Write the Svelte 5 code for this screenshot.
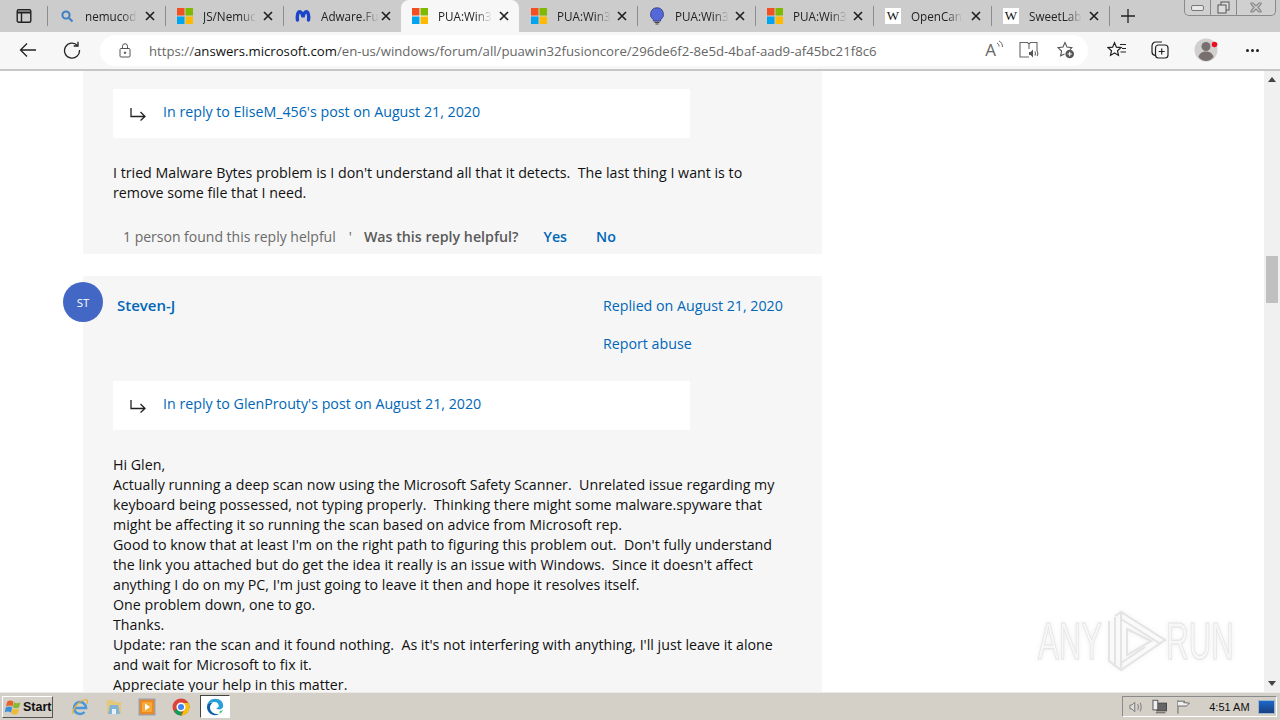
<script>
  const tabs = [
    { icon: 'search', label: 'nemucod' },
    { icon: 'ms', label: 'JS/Nemuc' },
    { icon: 'mb', label: 'Adware.Fu' },
    { icon: 'ms', label: 'PUA:Win3', active: true },
    { icon: 'ms', label: 'PUA:Win3' },
    { icon: 'bulb', label: 'PUA:Win3' },
    { icon: 'ms', label: 'PUA:Win3' },
    { icon: 'w', label: 'OpenCan' },
    { icon: 'w', label: 'SweetLab' }
  ];
</script>

<div class="screen">
  <header class="tabstrip">
    <div class="tabaction">
      <svg width="16" height="16" viewBox="0 0 16 16" fill="none" stroke="#222" stroke-width="1.4"><rect x="1.2" y="1.7" width="13.6" height="12.6" rx="1.5"/><path d="M1.2 4.5h13.6" stroke-width="2"/><path d="M5.5 4.5v9.8"/></svg>
    </div>
    {#each tabs as tab}
      <div class="tab" class:active={tab.active}>
        <span class="favicon">
          {#if tab.icon === 'ms'}
            <svg width="16" height="16" viewBox="0 0 16 16"><rect width="7.5" height="7.5" fill="#f25022"/><rect x="8.5" width="7.5" height="7.5" fill="#7fba00"/><rect y="8.5" width="7.5" height="7.5" fill="#00a4ef"/><rect x="8.5" y="8.5" width="7.5" height="7.5" fill="#ffb900"/></svg>
          {:else if tab.icon === 'search'}
            <svg width="16" height="16" viewBox="0 0 16 16" fill="none" stroke="#3b7fc4" stroke-width="2"><circle cx="7" cy="7" r="3.6"/><path d="M10 10l3.5 3.5"/></svg>
          {:else if tab.icon === 'mb'}
            <svg width="16" height="16" viewBox="0 0 16 16" fill="none" stroke="#1b45c8" stroke-width="3.4" stroke-linecap="round"><path d="M2.500 12C1.800 7 3 3.800 4.800 3.800 6.300 3.800 7.400 6.500 8 9c.6-2.500 1.700-5.200 3.200-5.200 1.800 0 3 3.200 2.300 8.200"/></svg>
          {:else if tab.icon === 'bulb'}
            <svg width="16" height="18" viewBox="0 0 16 18"><path d="M8 .8a6.500 6.500 0 0 0-3.600 11.900V14h7.200v-1.300A6.500 6.500 0 0 0 8 .8z" fill="#5568d8" stroke="#2f3a7c" stroke-width=".8"/><path d="M5.500 15.400h5M6.500 17h3" stroke="#444" stroke-width="1.200"/></svg>
          {:else}
            <span class="wiki">W</span>
          {/if}
        </span>
        <span class="tablabel">{tab.label}</span>
        <svg class="close" width="10" height="10" viewBox="0 0 10 10" stroke="#222" stroke-width="1.700"><path d="M1 1l8 8M9 1l-8 8"/></svg>
      </div>
    {/each}
    <span class="lastsep"></span>
    <svg class="newtab" width="16" height="16" viewBox="0 0 16 16" stroke="#222" stroke-width="1.300"><path d="M8 1v14M1 8h14"/></svg>
    <div class="winctl">
      <span class="wbtn wmin"><i></i></span>
      <span class="wbtn wmax"><svg width="13" height="13" viewBox="0 0 13 13" fill="#ddd" stroke="#555"><rect x="4" y="1" width="8" height="8"/><rect x="1" y="4" width="8" height="8"/></svg></span>
      <span class="wbtn wclose"><svg width="14" height="11" viewBox="0 0 14 11" fill="none" stroke="#888" stroke-width="1.200"><path d="M2 1h2l3 3 3-3h2v1L9 5.500 12 9v1h-2L7 7l-3 3H2V9l3-3.500L2 2z"/></svg></span>
    </div>
  </header>

  <nav class="toolbar">
    <svg class="tool back" width="18" height="16" viewBox="0 0 18 16" fill="none" stroke="#222" stroke-width="1.300"><path d="M17 8H1.500M8 1.500L1.500 8 8 14.500"/></svg>
    <svg class="tool reload" width="18" height="18" viewBox="0 0 18 18" fill="none" stroke="#222" stroke-width="1.300"><path d="M14.500 4.500A7.500 7.500 0 1 0 16.500 9"/><path d="M15 .8v4.200h-4.300"/></svg>
    <div class="address">
      <svg class="lock" width="12" height="15" viewBox="0 0 12 15" fill="none" stroke="#555"><rect x="1" y="5.500" width="10" height="8.500" rx="1"/><path d="M3.500 5.500V3.200a2.500 2.500 0 0 1 5 0v2.300"/><circle cx="6" cy="9.800" r=".8" fill="#555"/></svg>
      <span class="url"><span class="dim">https://</span>answers.microsoft.com<span class="dim">/en-us/windows/forum/all/puawin32fusioncore/296de6f2-8e5d-4baf-aad9-af45bc21f8c6</span></span>
      <span class="addr-icons">
        <span class="readaloud">A<svg width="8" height="11" viewBox="0 0 8 11" fill="none" stroke="#666"><path d="M1 3c1.500.6 2 2 2 3.500M3 1c2.500 1 3.500 3.500 3.500 6"/></svg></span>
        <svg class="reader" width="20" height="18" viewBox="0 0 20 18" fill="none" stroke="#666" stroke-width="1.100"><path d="M10 16H1V1.500h7.500L10 3l1.500-1.500H18V10M10 3v5"/><path d="M10 11h1.500L14 8.500v8L11.500 14H10z" fill="#555" stroke="none"/><path d="M15.800 10.500c.7 1 .7 3 0 4M18 10c1 1.500 1 3.500 0 5"/></svg>
        <svg width="18" height="18" viewBox="0 0 18 18" fill="none" stroke="#555" stroke-width="1.100"><path d="M13 8.500l1.800-1.900-4.800-.6L8 1.500 6 6l-5 .6 3.600 3.400-1 4.800L7.500 13"/><circle cx="12.700" cy="13" r="4.300" fill="#555" stroke="none"/><path d="M12.700 10.800v4.400M10.500 13h4.400" stroke="#fff"/></svg>
      </span>
    </div>
    <svg class="tool fav" width="20" height="18" viewBox="0 0 20 18" fill="none" stroke="#222" stroke-width="1.200"><path d="M7.500 1.800l1.900 4.400 4.600.4-3.500 3.100 1 4.700-4-2.400-4 2.400 1-4.700L1 6.600l4.600-.4zM13 3.500h6M15 7.500h4M13.500 11h5.500"/></svg>
    <svg class="tool coll" width="18" height="18" viewBox="0 0 18 18" fill="none" stroke="#222" stroke-width="1.200"><path d="M4 14.500c-2-.5-3-2-3-3.500V5c0-2 1.500-4 4-4h6"/><rect x="4.500" y="4" width="12.500" height="13" rx="3"/><path d="M10.700 7.500v6M7.700 10.500h6"/></svg>
    <span class="tool profile">
      <svg width="26" height="26" viewBox="0 0 26 26"><circle cx="12" cy="13" r="11.500" fill="#d2d0cf"/><circle cx="12" cy="9.500" r="4.500" fill="#77706f"/><path d="M4.500 20c1-4 4-5.500 7.500-5.500s6.500 1.500 7.500 5.500c-2 2.500-5 4-7.500 4s-5.500-1.500-7.500-4z" fill="#77706f"/><circle cx="20.500" cy="7.500" r="2.800" fill="#e81123"/></svg>
    </span>
    <span class="tool dots"><i></i><i></i><i></i></span>
  </nav>

  <div class="viewport">
    <main class="page">
      <article class="card first">
        <a class="replybox">
          <svg class="replyarrow" width="16" height="13" viewBox="0 0 16 13" fill="none" stroke="#222" stroke-width="1.300"><path d="M1 0v8.500h14M10.500 4l4.500 4.500-4.500 4"/></svg>
          In reply to EliseM_456's post on August 21, 2020
        </a>
        <p class="body">I tried Malware Bytes problem is I don't understand all that it detects.&nbsp; The last thing I want is to<br />remove some file that I need.</p>
        <div class="helpful">
          <span class="count">1 person found this reply helpful</span>
          <span class="dot">'</span>
          <strong class="ask">Was this reply helpful?</strong>
          <a class="vote yes">Yes</a>
          <a class="vote">No</a>
        </div>
      </article>

      <article class="card second">
        <div class="avatar">ST</div>
        <div class="head">
          <a class="author">Steven-J</a>
          <div class="meta">
            <a class="replied">Replied on August 21, 2020</a>
            <a>Report abuse</a>
          </div>
        </div>
        <a class="replybox">
          <svg class="replyarrow" width="16" height="13" viewBox="0 0 16 13" fill="none" stroke="#222" stroke-width="1.300"><path d="M1 0v8.500h14M10.500 4l4.500 4.500-4.500 4"/></svg>
          In reply to GlenProuty's post on August 21, 2020
        </a>
        <p class="body long">Hi Glen,<br />
Actually running a deep scan now using the Microsoft Safety Scanner.&nbsp; Unrelated issue regarding my<br />
keyboard being possessed, not typing properly.&nbsp; Thinking there might some malware.spyware that<br />
might be affecting it so running the scan based on advice from Microsoft rep.<br />
Good to know that at least I'm on the right path to figuring this problem out.&nbsp; Don't fully understand<br />
the link you attached but do get the idea it really is an issue with Windows.&nbsp; Since it doesn't affect<br />
anything I do on my PC, I'm just going to leave it then and hope it resolves itself.<br />
One problem down, one to go.<br />
Thanks.<br />
Update: ran the scan and it found nothing.&nbsp; As it's not interfering with anything, I'll just leave it alone<br />
and wait for Microsoft to fix it.<br />
Appreciate your help in this matter.</p>
      </article>
    </main>

    <aside class="scrollbar">
      <span class="arrow up"></span>
      <span class="thumb"></span>
      <span class="arrow down"></span>
    </aside>

    <div class="watermark">
      <span>ANY</span>
      <svg width="60" height="64" viewBox="0 0 60 64" fill="none" stroke="#e4e4e4" stroke-width="2"><path d="M2 12v40l12 9 44-30L14 3 8 7"/><path d="M8 8v50M14 3v56"/><path d="M20 20l24 12-24 14z"/><path d="M14 10l38 24M14 54l24-16"/></svg>
      <span class="run">RUN</span>
    </div>
  </div>

  <footer class="taskbar">
    <div class="start">
      <svg width="17" height="16" viewBox="0 0 16 15"><path d="M2 2.500c2-1.500 4-1.500 6 0L7 7C5 5.700 3 5.700 1 7z" fill="#e8622c"/><path d="M8.500 3c2 1.300 4 1.300 6 0l-1.200 4.800c-2 1.300-4 1.300-6 0z" fill="#8ab82e"/><path d="M.8 8c2-1.300 4-1.300 6 0l-1.200 4.800c-2-1.300-4-1.300-6 0z" fill="#3b8fd8"/><path d="M7.200 8.800c2 1.300 4 1.300 6 0L12 13.500c-2 1.300-4 1.300-6 0z" fill="#f2b92c"/></svg>
      <b>Start</b>
    </div>
    <div class="apps">
      <svg width="18" height="18" viewBox="0 0 18 18" fill="none"><path d="M3.500 10h11.500a6 6 0 1 0-1.500 4" stroke="#4a98d8" stroke-width="2.600"/><path d="M2 16C1 11 8 2.500 14.500 1.500c2.500 0 2.500 2 1.500 4.500" stroke="#e8b030" stroke-width="1.200"/></svg>
      <svg width="18" height="17" viewBox="0 0 18 17"><path d="M2 2h6l1.500 2H16v12H2z" fill="#e8c878"/><path d="M5 7h8l2 9H3z" fill="#7fb4d8"/><rect x="7" y="11" width="4" height="5" fill="#e8f0f8"/></svg>
      <svg width="18" height="18" viewBox="0 0 18 18"><rect x="1" y="1" width="16" height="16" fill="#e88a28" stroke="#8aa4c8"/><rect x="4" y="4" width="10" height="10" rx="1" fill="#f8a838"/><path d="M7 5.500l5 3.500-5 3.500z" fill="#fff"/></svg>
      <svg width="18" height="18" viewBox="0 0 18 18"><circle cx="9" cy="9" r="8.500" fill="#db4437"/><path d="M9 9L2 13a8.500 8.500 0 0 0 7.500 4.500z" fill="#0f9d58"/><path d="M9 5h7.500a8.500 8.500 0 0 1-7 12.500L13 10z" fill="#f4c20d"/><circle cx="9" cy="9" r="3.800" fill="#4285f4" stroke="#fff" stroke-width="1.500"/></svg>
      <span class="activeapp">
        <svg width="18" height="18" viewBox="0 0 18 18"><path d="M1 9C1 4 4.500.8 9.500.8c4.500 0 7.700 3.200 7.700 7 0 2.500-2 3.700-4 3.700-1.500 0-2.500-.5-3-1.200 2-.3 2.500-1.500 2.500-2.500C12.700 5.500 11 4 8.500 4 4.500 4 1 6 1 9z" fill="#2a9fd8"/><path d="M1 9c0-3.500 3.500-4.500 6-4.500-2 1-3 3-3 5 0 4 4 7.500 9.500 6.300-1.300.9-2.800 1.400-4.500 1.400C4.500 17.200 1 13.500 1 9z" fill="#0a5fa8"/><path d="M13.500 15.800c1.500-.7 3-2 3.700-4-1 1-2.500 1-3.500 1.200z" fill="#3cc884"/></svg>
      </span>
    </div>
    <div class="tray">
      <svg width="16" height="14" viewBox="0 0 16 14" fill="none" stroke="#777"><path d="M1 5h2l3-3v10L3 9H1z" fill="#ddd"/><path d="M9 4c1 2 1 4 0 6M11.500 2.500c1.500 3 1.500 6 0 9"/></svg>
      <svg width="16" height="16" viewBox="0 0 16 16"><rect x="5" y="4" width="10" height="8" fill="#666" stroke="#444"/><rect x="1" y="1" width="5" height="10" fill="#eee" stroke="#555"/><path d="M4 14h10" stroke="#555"/></svg>
      <svg width="16" height="16" viewBox="0 0 16 16" fill="none" stroke="#666"><path d="M2 1v14"/><path d="M2 2h7l-1 1.500 6 .5-3 3H2" fill="#eee"/></svg>
      <span class="clock">4:51 AM</span>
      <span class="showdesk"></span>
    </div>
  </footer>
</div>

<style>
  :global(body) {
    margin: 0;
    overflow: hidden;
  }
  .screen {
    width: 1280px;
    height: 720px;
    display: flex;
    flex-direction: column;
    overflow: hidden;
    font-family: "Open Sans", "Liberation Sans", sans-serif;
    color: #111;
  }
  .tabstrip {
    height: 32px;
    flex: none;
    display: flex;
    align-items: stretch;
    background: #cccccc;
    position: relative;
  }
  .tabaction {
    width: 47px;
    display: flex;
    align-items: center;
    justify-content: center;
  }
  .tab {
    width: 118px;
    box-sizing: border-box;
    display: flex;
    align-items: center;
    position: relative;
    padding-left: 12px;
  }
  .tab::before,
  .lastsep {
    content: "";
    width: 1px;
    background: #8c8c8c;
  }
  .tab::before {
    position: absolute;
    left: 0;
    top: 6px;
    bottom: 6px;
  }
  .tab.active::before,
  .tab.active + .tab::before {
    display: none;
  }
  .tab.active {
    background: #f7f7f7;
    border-radius: 8px 8px 0 0;
    padding-left: 11px;
  }
  .lastsep {
    margin: 6px 0;
  }
  .favicon {
    width: 16px;
    height: 16px;
    flex: none;
    display: flex;
    align-items: center;
    justify-content: center;
  }
  .wiki {
    width: 16px;
    height: 16px;
    background: #fff;
    font: 13px/16px "Liberation Serif", serif;
    text-align: center;
    color: #111;
  }
  .tablabel {
    margin-left: 10px;
    font-size: 11.700px;
    white-space: nowrap;
    color: #222;
    -webkit-mask-image: linear-gradient(90deg, #000 70%, transparent);
    mask-image: linear-gradient(90deg, #000 70%, transparent);
  }
  .close {
    position: absolute;
    left: 98px;
    top: 11px;
  }
  .newtab {
    margin: 8px 0 0 10px;
  }
  .winctl {
    position: absolute;
    left: 1184px;
    top: 0;
    width: 92px;
    height: 16px;
    box-sizing: border-box;
    display: flex;
    border: 1px solid #8a8a8a;
    border-top: 0;
    border-radius: 0 0 5px 5px;
    background: #d0d0d0;
  }
  .wbtn {
    display: flex;
    align-items: center;
    justify-content: center;
    border-right: 1px solid #8a8a8a;
  }
  .wmin { width: 25px; }
  .wmin i {
    width: 11px;
    height: 4px;
    border: 1px solid #777;
    border-radius: 2px;
    background: #e8e8e8;
  }
  .wmax { width: 25px; }
  .wclose { flex: 1; border-right: 0; }

  .toolbar {
    height: 39px;
    flex: none;
    box-sizing: border-box;
    background: #f7f7f7;
    border-bottom: 2px solid #c6c6c6;
    display: flex;
    align-items: center;
    position: relative;
    padding-bottom: 1px;
  }
  .back { margin-left: 19px; }
  .reload { margin-left: 26px; }
  .address {
    margin-left: 19px;
    width: 988px;
    height: 31px;
    box-sizing: border-box;
    background: #fff;
    border-radius: 16px;
    display: flex;
    align-items: center;
    padding-left: 19px;
  }
  .url {
    margin: 1px 0 0 18px;
    font-size: 13.200px;
    white-space: nowrap;
    color: #111;
  }
  .dim { color: #666; }
  .addr-icons {
    margin-left: auto;
    display: flex;
    align-items: center;
    gap: 17px;
    padding-right: 13px;
  }
  .readaloud {
    font-size: 17px;
    color: #666;
    display: flex;
    align-items: flex-start;
    line-height: 20px;
    margin-right: -2px;
  }
  .reader { margin-right: 1px; }
  .fav { margin-left: 19px; }
  .coll { margin-left: 24px; }
  .profile { margin-left: 25px; display: flex; }
  .dots {
    margin-left: 26px;
    display: flex;
    gap: 2px;
  }
  .dots i {
    width: 3px;
    height: 3px;
    border-radius: 50%;
    background: #222;
  }

  .viewport {
    flex: 1;
    min-height: 0;
    display: flex;
    position: relative;
    background: #fff;
    overflow: hidden;
  }
  .page {
    flex: 1;
    padding-left: 83px;
    overflow: hidden;
  }
  .card {
    width: 739px;
    box-sizing: border-box;
    background: #f6f6f6;
    padding: 0 30px;
    position: relative;
  }
  .card.first {
    height: 183px;
    padding-top: 18px;
  }
  .card.second {
    margin-top: 22px;
    height: 430px;
    padding-top: 19px;
  }
  a {
    color: #0067b8;
  }
  .replybox {
    width: 577px;
    height: 49px;
    box-sizing: border-box;
    background: #fff;
    display: flex;
    align-items: center;
    padding: 0 0 4px 17px;
    font-size: 14.230px;
    white-space: nowrap;
  }
  .replyarrow {
    margin: 5px 17px 0 0;
    flex: none;
  }
  .body {
    margin: 25px 0 0;
    font-size: 14.230px;
    line-height: 20px;
    color: #111;
    white-space: nowrap;
  }
  .helpful {
    display: flex;
    align-items: center;
    margin-top: 21px;
    padding-left: 10px;
    height: 24px;
    font-size: 14.230px;
    color: #6a6a6a;
    white-space: nowrap;
  }
  .count { font-size: 14px; }
  .dot {
    margin: 0 12px 0 13px;
  }
  .ask {
    color: #5a5a5a;
    font-weight: 600;
  }
  .vote {
    margin-left: 29px;
    font-weight: 600;
  }
  .vote.yes { margin-left: 25px; }
  .avatar {
    position: absolute;
    left: -20px;
    top: 6px;
    width: 40px;
    height: 40px;
    border-radius: 50%;
    background: #4267c4;
    color: #fff;
    font-size: 11.500px;
    display: flex;
    align-items: center;
    justify-content: center;
  }
  .head {
    display: flex;
    justify-content: space-between;
    height: 85px;
    margin-top: 1px;
    font-size: 14.230px;
    padding-right: 6px;
  }
  .author {
    font-size: 15px;
    font-weight: 600;
    margin: -1px 0 0 4px;
    line-height: 20px;
  }
  .meta {
    display: flex;
    flex-direction: column;
    gap: 18px;
    line-height: 20px;
    width: 183px;
    white-space: nowrap;
  }
  .scrollbar {
    width: 16px;
    flex: none;
    background: #f0f0f0;
    position: relative;
    display: flex;
    flex-direction: column;
    align-items: center;
  }
  .arrow {
    width: 0;
    height: 0;
    border-left: 4.500px solid transparent;
    border-right: 4.500px solid transparent;
    flex: none;
  }
  .arrow.up {
    border-bottom: 5px solid #444;
    margin-top: 6px;
  }
  .arrow.down {
    border-top: 5px solid #444;
    margin-top: auto;
    margin-bottom: 6px;
  }
  .thumb {
    position: absolute;
    top: 185px;
    left: 2px;
    width: 12px;
    height: 47px;
    background: #c0c0c0;
  }
  .watermark {
    position: absolute;
    left: 1038px;
    top: 538px;
    display: flex;
    align-items: center;
    gap: 5px;
    pointer-events: none;
    filter: drop-shadow(0 0 2px #eeeeee);
  }
  .watermark span {
    font: 400 52px/64px "Liberation Sans", sans-serif;
    color: #f7f7f7;
    -webkit-text-stroke: 1px #e4e4e4;
    width: 64px;
    display: flex;
    justify-content: center;
    transform: scaleX(.6);
  }
  .watermark .run {
    margin-left: -4px;
  }

  .taskbar {
    height: 28px;
    flex: none;
    box-sizing: border-box;
    background: #d4d0c8;
    border-top: 1px solid #eceae6;
    display: flex;
    align-items: center;
    position: relative;
  }
  .start {
    margin-left: 2px;
    width: 51px;
    height: 22px;
    box-sizing: border-box;
    display: flex;
    align-items: center;
    gap: 1px;
    padding-left: 2px;
    background: #d4d0c8;
    border: 1px solid;
    border-color: #fff #555 #555 #fff;
    font: 12.500px "Liberation Sans", sans-serif;
    color: #111;
  }
  .apps {
    display: flex;
    align-items: center;
    margin-left: 18px;
    gap: 15.700px;
  }
  .activeapp {
    margin-left: -6px;
    width: 30px;
    height: 23px;
    box-sizing: border-box;
    display: flex;
    align-items: center;
    justify-content: center;
    background: #fff;
    border: 1px solid;
    border-color: #444 #fff #fff #444;
  }
  .tray {
    margin-left: auto;
    margin-right: 3px;
    width: 155px;
    height: 21px;
    box-sizing: border-box;
    display: flex;
    align-items: center;
    gap: 8px;
    padding-left: 6px;
    border: 1px solid;
    border-color: #8a8a8a #fff #fff #8a8a8a;
  }
  .clock {
    margin-left: 10px;
    font: 11px "Liberation Sans", sans-serif;
    color: #111;
    white-space: nowrap;
  }
  .showdesk {
    margin-left: auto;
    margin-right: 1px;
    width: 16px;
    height: 12px;
    background: linear-gradient(#1c68c8, #1a3f80);
    border: 1px solid #9db4d0;
  }
</style>
